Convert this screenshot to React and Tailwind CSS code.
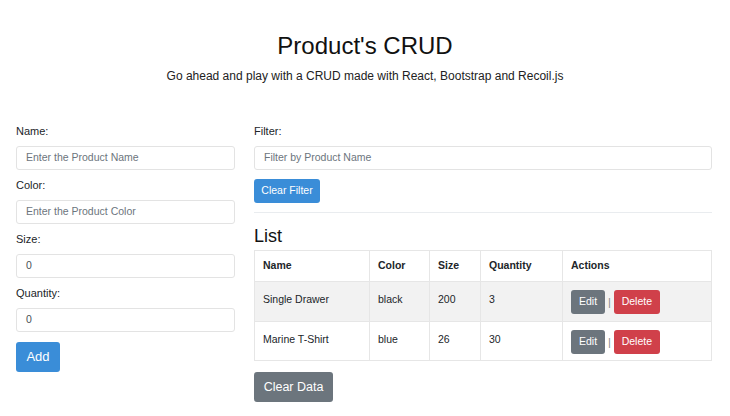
import React from "react";

const Label = ({ children }) => (
  <div className="text-[11px] leading-[14px] text-[#212529] mb-2">{children}</div>
);

const Input = ({ placeholder, value }) => (
  <div className="h-[24px] border border-[#e3e3e3] rounded-[3px] px-[9px] flex items-center text-[10.5px] text-[#6c757d] bg-white">
    {value !== undefined ? <span className="text-[#495057]">{value}</span> : placeholder}
  </div>
);

const rows = [
  { name: "Single Drawer", color: "black", size: "200", qty: "3" },
  { name: "Marine T-Shirt", color: "blue", size: "26", qty: "30" },
];

export default function App() {
  return (
    <div className="w-[730px] h-[416px] bg-white text-[#212529] font-['Liberation_Sans',Arial,sans-serif] overflow-hidden">
      <div className="pt-[31px] text-center">
        <h1 className="text-[24px] leading-[30px] text-[#111]">Product's CRUD</h1>
        <p className="mt-[6px] text-[12px] leading-[18px] text-[#222]">
          Go ahead and play with a CRUD made with React, Bootstrap and Recoil.js
        </p>
      </div>
      <div className="flex pl-4 pr-[18px] mt-[39px]">
        <div className="w-[219px]">
          <Label>Name:</Label>
          <Input placeholder="Enter the Product Name" />
          <div className="h-[8px]" />
          <Label>Color:</Label>
          <Input placeholder="Enter the Product Color" />
          <div className="h-[8px]" />
          <Label>Size:</Label>
          <Input value="0" />
          <div className="h-[8px]" />
          <Label>Quantity:</Label>
          <Input value="0" />
          <button className="mt-[10px] w-[44px] h-[30px] rounded-[3px] bg-[#3a8dd8] text-white text-[13px]">
            Add
          </button>
        </div>
        <div className="flex-1 ml-[19px]">
          <Label>Filter:</Label>
          <Input placeholder="Filter by Product Name" />
          <button className="mt-[9px] w-[66px] h-[24px] rounded-[3px] bg-[#3a8dd8] text-white text-[10.5px]">
            Clear Filter
          </button>
          <div className="mt-[9px] border-t border-[#e9ecef]" />
          <div className="mt-[12px] text-[18px] leading-[22px] text-[#111]">List</div>
          <table className="mt-[3px] w-full border-collapse text-[10.5px]">
            <colgroup>
              <col className="w-[115px]" />
              <col className="w-[60px]" />
              <col className="w-[51px]" />
              <col className="w-[82px]" />
              <col />
            </colgroup>
            <thead>
              <tr className="h-[31px]">
                {["Name", "Color", "Size", "Quantity", "Actions"].map((h) => (
                  <th
                    key={h}
                    className="border border-[#e6e6e6] text-left font-bold px-[8px] align-middle"
                  >
                    {h}
                  </th>
                ))}
              </tr>
            </thead>
            <tbody>
              {rows.map((r, i) => (
                <tr key={r.name} className={i === 0 ? "h-[40px] bg-[#f2f2f2]" : "h-[39px]"}>
                  <td className="border border-[#e6e6e6] px-[8px] align-top pt-[10px]">{r.name}</td>
                  <td className="border border-[#e6e6e6] px-[8px] align-top pt-[10px]">{r.color}</td>
                  <td className="border border-[#e6e6e6] px-[8px] align-top pt-[10px]">{r.size}</td>
                  <td className="border border-[#e6e6e6] px-[8px] align-top pt-[10px]">{r.qty}</td>
                  <td className="border border-[#e6e6e6] px-[8px] align-top pt-[8px]">
                    <div className="flex items-center">
                      <button className="w-[34px] h-[24px] rounded-[3px] bg-[#6c757d] text-white text-[10.5px]">
                        Edit
                      </button>
                      <span className="mx-[3px] text-[#888] text-[11px]">|</span>
                      <button className="w-[46px] h-[24px] rounded-[3px] bg-[#d0404a] text-white text-[10.5px]">
                        Delete
                      </button>
                    </div>
                  </td>
                </tr>
              ))}
            </tbody>
          </table>
          <button className="mt-[11px] w-[79px] h-[30px] rounded-[3px] bg-[#6c757d] text-white text-[12.5px]">
            Clear Data
          </button>
        </div>
      </div>
    </div>
  );
}
